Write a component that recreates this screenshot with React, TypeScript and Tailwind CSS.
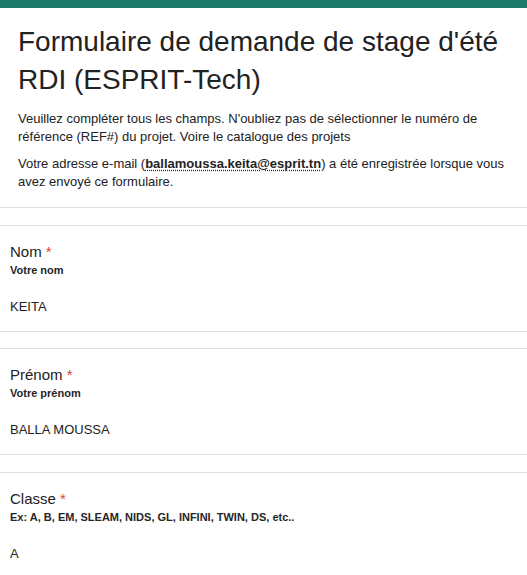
import React from "react";

const font = { fontFamily: '"Liberation Sans", Arial, sans-serif' };

function Field({ label, help, value, last }: { label: string; help: string; value: string; last?: boolean }) {
  return (
    <div
      className={
        "border-t border-b border-t-[#e0e0e0] px-[10px] pt-[17px] pb-[15px] " +
        (last ? "border-b-[#d3dbe8]" : "border-b-[#e0e0e0]")
      }
    >
      <div className="text-[15px] leading-[18px] text-[#222]">
        {label} <span className="text-[#db4437]">*</span>
      </div>
      <div className="mt-[2px] text-[11px] leading-[14px] text-[#262626] font-bold">{help}</div>
      <div className="mt-[21px] text-[13px] leading-[18px] text-[#222]">{value}</div>
    </div>
  );
}

export default function App() {
  return (
    <div className="w-[527px] h-[575px] overflow-hidden bg-white" style={font}>
      <div className="h-2 bg-[#1e7b6b]" />
      <div className="px-[18px] pt-[15px] pb-[16px] border-b border-[#e0e0e0]">
        <h1 className="text-[28px] leading-[38px] text-[#222]">
          Formulaire de demande de stage d'été RDI (ESPRIT-Tech)
        </h1>
        <div className="mt-[11px] text-[13px] leading-[18px] text-[#222]">
          <p>
            Veuillez compléter tous les champs. N'oubliez pas de sélectionner le numéro de référence (REF#) du projet.
            Voire le catalogue des projets
          </p>
          <p className="mt-[9px]">
            Votre adresse e-mail (
            <span className="font-bold underline decoration-dotted underline-offset-2">ballamoussa.keita@esprit.tn</span>) a été
            enregistrée lorsque vous avez envoyé ce formulaire.
          </p>
        </div>
      </div>
      <div className="h-[17px]" />
      <Field label="Nom" help="Votre nom" value="KEITA" />
      <div className="h-[16px]" />
      <Field label="Prénom" help="Votre prénom" value="BALLA MOUSSA" />
      <div className="h-[17px]" />
      <Field label="Classe" help="Ex: A, B, EM, SLEAM, NIDS, GL, INFINI, TWIN, DS, etc.." value="A" last />
    </div>
  );
}
